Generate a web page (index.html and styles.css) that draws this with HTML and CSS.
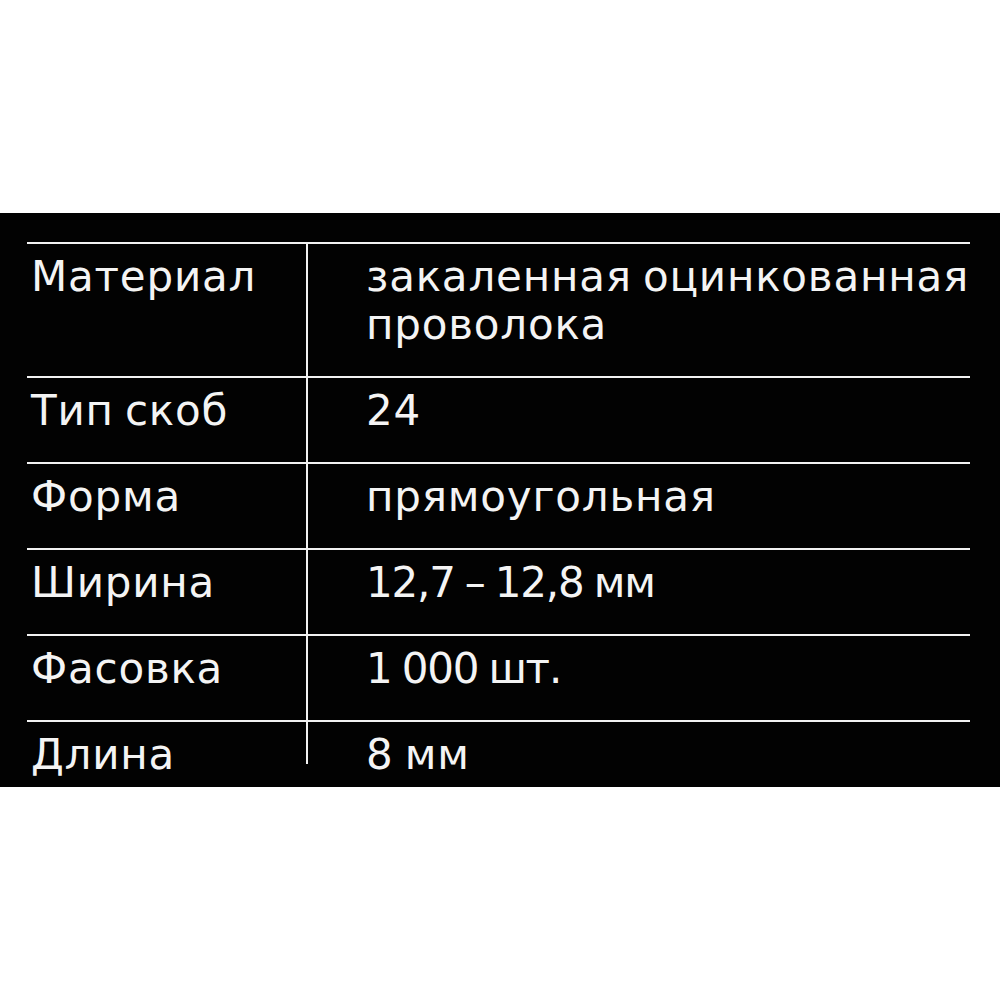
FILE: index.html
```html
<!DOCTYPE html>
<html lang="ru">
<head>
<meta charset="utf-8">
<link rel="stylesheet" href="styles.css">
</head>
<body>
<div class="page">
  <section class="band">
    <div class="table">
      <div class="row"><div class="key">Материал</div><div class="val">закаленная оцинкованная<br>проволока</div></div>
      <div class="row"><div class="key">Тип скоб</div><div class="val">24</div></div>
      <div class="row"><div class="key">Форма</div><div class="val">прямоугольная</div></div>
      <div class="row"><div class="key">Ширина</div><div class="val num">12,7 – 12,8 мм</div></div>
      <div class="row"><div class="key">Фасовка</div><div class="val num">1 000 шт.</div></div>
      <div class="row last"><div class="key">Длина</div><div class="val">8 мм</div></div>
    </div>
  </section>
</div>
</body>
</html>
```

FILE: styles.css
```css
html, body {
  margin: 0;
  padding: 0;
  background: #ffffff;
}
.page {
  width: 1000px;
  height: 1000px;
  padding-top: 213px;
  box-sizing: border-box;
}
.band {
  height: 574px;
  background: #020202;
  padding: 29px 30px 0 27px;
  box-sizing: border-box;
  overflow: hidden;
}
.table {
  width: 943px;
  font-family: "DejaVu Sans", sans-serif;
  font-size: 42px;
  line-height: 48px;
  color: #f4f4f4;
  letter-spacing: 0.8px;
  word-spacing: -3px;
}
.row {
  display: grid;
  grid-template-columns: 281px 1fr;
  border-top: 2px solid #f2f2f2;
}
.key {
  padding: 9px 0 27px 4px;
  border-right: 2px solid #f2f2f2;
}
.val {
  padding: 9px 0 27px 58px;
  white-space: nowrap;
}
.val.num {
  letter-spacing: -1.2px;
  word-spacing: -2px;
}
.row.last .key,
.row.last .val {
  height: 33px;
  padding-bottom: 0;
}
```
